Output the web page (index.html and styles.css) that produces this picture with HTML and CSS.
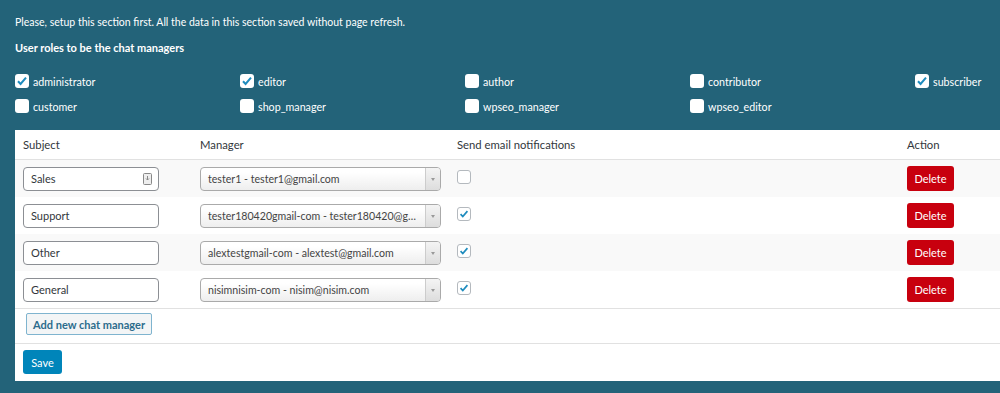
FILE: index.html
```html
<!DOCTYPE html>
<html>
<head>
    <title>Chat managers</title>
    <link rel="stylesheet" href="styles.css">
</head>
<body>
    <p class="notice">Please, setup this section first. All the data in this section saved without page refresh.</p>
    <h4 class="roles-title">User roles to be the chat managers</h4>

    <div class="roles">
        <label class="role"><span class="box checked"><svg viewBox="0 0 14 14"><path d="M3 7.2l2.6 2.8L11 3.6"/></svg></span>administrator</label>
        <label class="role"><span class="box checked"><svg viewBox="0 0 14 14"><path d="M3 7.2l2.6 2.8L11 3.6"/></svg></span>editor</label>
        <label class="role"><span class="box"></span>author</label>
        <label class="role"><span class="box"></span>contributor</label>
        <label class="role"><span class="box checked"><svg viewBox="0 0 14 14"><path d="M3 7.2l2.6 2.8L11 3.6"/></svg></span>subscriber</label>
        <label class="role"><span class="box"></span>customer</label>
        <label class="role"><span class="box"></span>shop_manager</label>
        <label class="role"><span class="box"></span>wpseo_manager</label>
        <label class="role"><span class="box"></span>wpseo_editor</label>
    </div>

    <div class="panel">
        <table class="managers">
            <colgroup>
                <col class="c-subject">
                <col class="c-manager">
                <col class="c-notify">
                <col class="c-action">
            </colgroup>
            <thead>
                <tr>
                    <th>Subject</th>
                    <th>Manager</th>
                    <th>Send email notifications</th>
                    <th>Action</th>
                </tr>
            </thead>
            <tbody>
                <tr class="alt">
                    <td><div class="field">Sales<span class="pw-icon"><svg viewBox="0 0 9 12"><rect x="0.5" y="0.5" width="8" height="11" rx="1"/><path d="M4.5 3v4M3 5.5l1.5 1.5 1.5-1.5"/></svg></span></div></td>
                    <td><div class="select"><span class="value">tester1 - tester1@gmail.com</span><span class="arrow"></span></div></td>
                    <td><span class="tick"></span></td>
                    <td><button class="delete">Delete</button></td>
                </tr>
                <tr>
                    <td><div class="field">Support</div></td>
                    <td><div class="select"><span class="value">tester180420gmail-com - tester180420@gm...</span><span class="arrow"></span></div></td>
                    <td><span class="tick on"><svg viewBox="0 0 14 14"><path d="M3 7.2l2.6 2.8L11 3.6"/></svg></span></td>
                    <td><button class="delete">Delete</button></td>
                </tr>
                <tr class="alt">
                    <td><div class="field">Other</div></td>
                    <td><div class="select"><span class="value">alextestgmail-com - alextest@gmail.com</span><span class="arrow"></span></div></td>
                    <td><span class="tick on"><svg viewBox="0 0 14 14"><path d="M3 7.2l2.6 2.8L11 3.6"/></svg></span></td>
                    <td><button class="delete">Delete</button></td>
                </tr>
                <tr>
                    <td><div class="field">General</div></td>
                    <td><div class="select"><span class="value">nisimnisim-com - nisim@nisim.com</span><span class="arrow"></span></div></td>
                    <td><span class="tick on"><svg viewBox="0 0 14 14"><path d="M3 7.2l2.6 2.8L11 3.6"/></svg></span></td>
                    <td><button class="delete">Delete</button></td>
                </tr>
            </tbody>
        </table>

        <div class="add-row">
            <button class="add">Add new chat manager</button>
        </div>
        <div class="save-row">
            <button class="save">Save</button>
        </div>
    </div>
</body>
</html>
```

FILE: styles.css
```css
html, body {
    margin: 0;
    overflow: hidden;
}
body {
    font-family: Lato, 'Open Sans', sans-serif;
    font-size: 12px;
    background-color: #236379;
    color: #fff;
    padding: 12px 0 12px 15px;
}
.notice {
    margin: 0;
    line-height: 20px;
    font-size: 10.5px;
}
.roles-title {
    margin: 6px 0 0;
    font-size: 11px;
    line-height: 20px;
    font-weight: 700;
}
.roles {
    display: grid;
    grid-template-columns: repeat(5, 225px);
    row-gap: 5px;
    margin-top: 13px;
    margin-bottom: 14px;
}
.role {
    display: flex;
    align-items: center;
    height: 20px;
    font-size: 10.7px;
}
.box {
    width: 14px;
    height: 14px;
    border-radius: 3px;
    background: #fff;
    margin-right: 4px;
    display: inline-flex;
}
.box svg, .tick svg {
    width: 14px;
    height: 14px;
}
.box path, .tick path {
    fill: none;
    stroke: #1e8cbe;
    stroke-width: 2;
}
.panel {
    background: #fff;
    color: #32373c;
}
.managers {
    width: 100%;
    border-collapse: collapse;
    table-layout: fixed;
}
.c-subject { width: 177px; }
.c-manager { width: 257px; }
.c-notify { width: 450px; }
.managers th {
    text-align: left;
    font-weight: 400;
    font-size: 11.3px;
    padding: 0 8px;
    height: 29px;
    border-bottom: 1px solid #e1e1e1;
}
.managers td {
    height: 37px;
    padding: 0 8px;
    vertical-align: middle;
}
.managers tr.alt td {
    background: #f9f9f9;
}
.managers tbody tr:last-child td {
    border-bottom: 1px solid #e1e1e1;
}
.field {
    width: 136px;
    height: 24px;
    box-sizing: border-box;
    border: 1px solid #8c8f94;
    border-radius: 4px;
    background: #fff;
    display: flex;
    align-items: center;
    justify-content: space-between;
    padding: 0 6px 0 7px;
    font-size: 11px;
    color: #32373c;
}
.pw-icon {
    display: inline-flex;
}
.pw-icon svg {
    width: 9px;
    height: 12px;
}
.pw-icon rect {
    fill: #eee;
    stroke: #888;
}
.pw-icon path {
    fill: none;
    stroke: #888;
    stroke-width: 1;
}
.select {
    width: 241px;
    height: 24px;
    box-sizing: border-box;
    border: 1px solid #aaa;
    border-radius: 4px;
    background: linear-gradient(#fff 20%, #eee);
    display: flex;
    align-items: center;
    font-size: 10.6px;
    color: #444;
    overflow: hidden;
}
.select .value {
    flex: 1;
    min-width: 0;
    padding-left: 7px;
    padding-right: 4px;
    white-space: nowrap;
    overflow: hidden;
    text-overflow: ellipsis;
}
.select .arrow {
    width: 14px;
    height: 100%;
    border-left: 1px solid #ccc;
    background: linear-gradient(#f4f4f4, #ddd);
    position: relative;
}
.select .arrow::after {
    content: "";
    position: absolute;
    left: 5px;
    top: 10px;
    border-left: 2px solid transparent;
    border-right: 2px solid transparent;
    border-top: 3px solid #999;
}
.tick {
    display: inline-flex;
    width: 14px;
    height: 14px;
    box-sizing: border-box;
    border: 1px solid #b4b9be;
    border-radius: 3px;
    background: #fff;
    vertical-align: middle;
    margin-top: -6px;
}
.tick svg {
    width: 12px;
    height: 12px;
}
.delete {
    width: 47px;
    height: 25px;
    border: 0;
    border-radius: 3px;
    background: #c8000e;
    color: #fff;
    font-family: inherit;
    font-size: 11px;
    padding: 0;
    cursor: pointer;
}
.add-row {
    padding: 4px 0 8px 11px;
    border-bottom: 1px solid #e1e1e1;
}
.add {
    height: 22px;
    padding: 0 6px;
    border: 1px solid #7fb4cf;
    border-radius: 2px;
    background: #f3f5f6;
    color: #2c6c8c;
    font-family: inherit;
    font-size: 11px;
    font-weight: 700;
    cursor: pointer;
}
.save-row {
    padding: 6px 0 7px 8px;
}
.save {
    width: 39px;
    height: 24px;
    padding: 0;
    border: 0;
    border-radius: 3px;
    background: #0085ba;
    color: #fff;
    font-family: inherit;
    font-size: 11px;
    cursor: pointer;
}
```
